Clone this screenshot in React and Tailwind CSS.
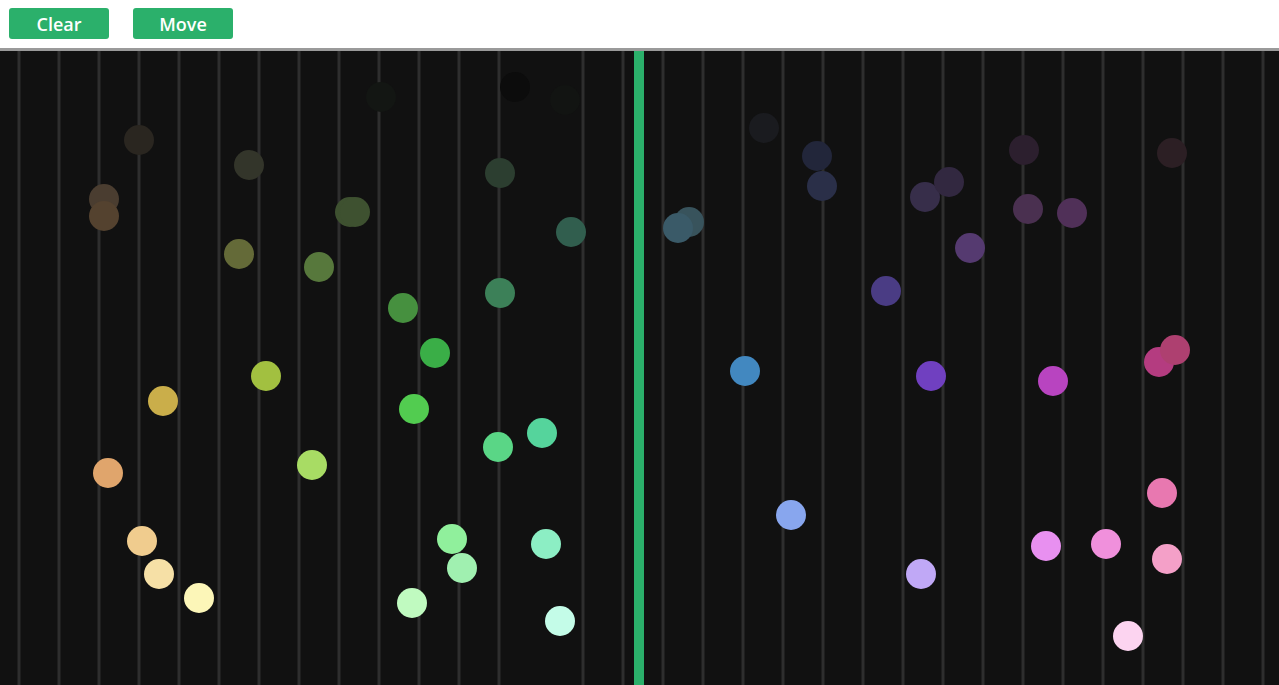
import React from 'react';

const lines = [
  ...Array.from({ length: 13 }, (_, i) => 19 + i * 40),
  ...Array.from({ length: 18 }, (_, i) => 583 + i * 40),
];

// page coordinates (center x, center y), drawn in order
const notes = [
  [139, 140, '#2a2620'],
  [249, 165, '#33352a'],
  [104, 199, '#4a3d30'],
  [104, 216, '#54422f'],
  [350, 212, '#3e5130'],
  [355, 212, '#3e5130'],
  [381, 97, '#131613'],
  [515, 87, '#0c0c0c'],
  [565, 100, '#121412'],
  [500, 173, '#2c3e30'],
  [571, 232, '#315e4e'],
  [239, 254, '#646a38'],
  [319, 267, '#57783c'],
  [500, 293, '#3c8058'],
  [403, 308, '#46903f'],
  [435, 353, '#3aae47'],
  [266, 376, '#a2c040'],
  [163, 401, '#caae4a'],
  [414, 409, '#52cc50'],
  [498, 447, '#5ad686'],
  [542, 433, '#55d49c'],
  [108, 473, '#e0a56c'],
  [312, 465, '#a8dc64'],
  [142, 541, '#f0cc8e'],
  [159, 574, '#f6e0a6'],
  [199, 598, '#fcf6b8'],
  [452, 539, '#90f09c'],
  [462, 568, '#a0f0b0'],
  [546, 544, '#8ceec4'],
  [412, 603, '#c0fac0'],
  [560, 621, '#c4fce8'],
  [689, 222, '#38535c'],
  [678, 228, '#3a5a68'],
  [764, 128, '#1a1b1f'],
  [817, 156, '#22263a'],
  [822, 186, '#2a2f48'],
  [925, 197, '#372e4a'],
  [949, 182, '#322840'],
  [1024, 150, '#2c1f2e'],
  [1172, 153, '#2c1f24'],
  [1028, 209, '#4a3050'],
  [1072, 213, '#503058'],
  [970, 248, '#553a70'],
  [886, 291, '#4a3c84'],
  [745, 371, '#4288c0'],
  [931, 376, '#7040c0'],
  [1053, 381, '#b844c0'],
  [1159, 362, '#b43c80'],
  [1175, 350, '#ae4070'],
  [1162, 493, '#e878b0'],
  [791, 515, '#88a6ee'],
  [921, 574, '#c0a8f6'],
  [1046, 546, '#e890f0'],
  [1106, 544, '#f090dc'],
  [1167, 559, '#f4a0c8'],
  [1128, 636, '#fcd4f0'],
];

const TOP = 51;

const App = () => {
  return (
    <div className="w-[1279px] h-[685px] overflow-hidden bg-white font-['Open_Sans',sans-serif]">
      {/* Toolbar */}
      <div className="h-[48px] flex items-start pt-[8px] pl-[9px] gap-[24px]">
        <button className="w-[100px] h-[31px] rounded-[3px] bg-[#2bb06b] text-white text-[18px] font-semibold leading-none">
          Clear
        </button>
        <button className="w-[100px] h-[31px] rounded-[3px] bg-[#2bb06b] text-white text-[18px] font-semibold leading-none">
          Move
        </button>
      </div>
      <div className="h-[3px] bg-[#9a9a9a]" />

      {/* Sequencer canvas */}
      <svg width="1279" height="634" className="block bg-[#111111]">
        {lines.map((x) => (
          <rect key={x} x={x - 1.5} y="0" width="3" height="634" fill="#2e2e2e" />
        ))}
        <rect x="634" y="0" width="10" height="634" fill="#2bb06b" />
        {notes.map(([x, y, c], i) => (
          <circle key={i} cx={x} cy={y - TOP} r="15" fill={c} />
        ))}
      </svg>
    </div>
  );
};

export default App;
